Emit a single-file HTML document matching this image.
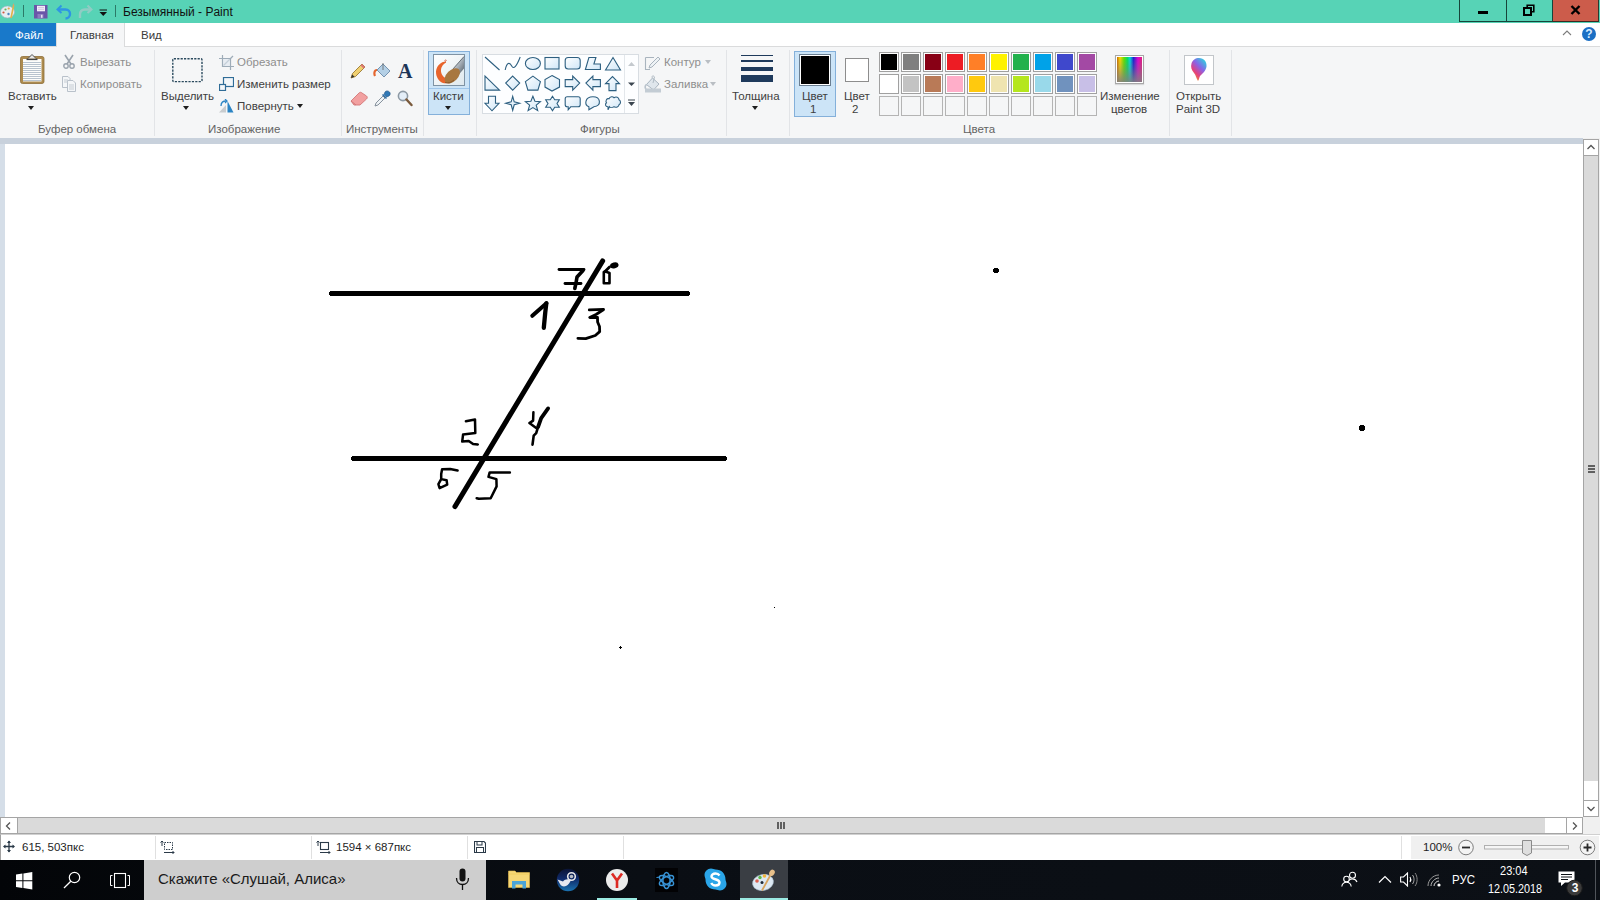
<!DOCTYPE html>
<html><head><meta charset="utf-8">
<style>
*{box-sizing:border-box}
html,body{margin:0;padding:0;width:1600px;height:900px;overflow:hidden;background:#fff;font-family:"Liberation Sans",sans-serif}
.a{position:absolute}
.t{position:absolute;font-size:11.5px;line-height:11.5px;white-space:nowrap;color:#404040}
.dis{color:#8e8e8e}
.lbl{color:#636363}
.sep{position:absolute;top:50px;width:1px;height:86px;background:#e2e4e7}
.arr{position:absolute;width:0;height:0;border-left:3.5px solid transparent;border-right:3.5px solid transparent;border-top:4px solid #1e1e1e}
.sw{position:absolute;width:20px;height:20px;border:1px solid #a0a0a0;background:#fff;padding:1px}
.sw i{display:block;width:16px;height:16px}
</style></head><body>
<!-- title bar -->
<div class="a" style="left:0;top:0;width:1600px;height:23px;background:#57d3b6"></div>
<div id="titlebar-content">

<svg class="a" style="left:0;top:2px" width="17" height="17" viewBox="0 0 17 17">
 <ellipse cx="7.5" cy="10" rx="7" ry="6" fill="#e6eef2" stroke="#9fb1bd" stroke-width="0.6"/>
 <circle cx="3.5" cy="10.5" r="1.1" fill="#d0583f"/>
 <circle cx="5.5" cy="7.5" r="1.1" fill="#6db35a"/>
 <circle cx="8.7" cy="6.5" r="1.1" fill="#e9a54a"/>
 <circle cx="8.5" cy="12" r="1.2" fill="#4c86c0"/>
 <path d="M11 16 L13.5 4" stroke="#e2b14a" stroke-width="1.6"/>
 <path d="M12.5 4 L13.5 1 L14.5 4 Z" fill="#d9a36a"/>
</svg>
<div class="a" style="left:23px;top:5px;width:1px;height:12px;background:#2b7a67"></div>
<svg class="a" style="left:34px;top:5px" width="14" height="14" viewBox="0 0 14 14">
 <rect x="0" y="0" width="13.5" height="13.5" fill="#6a55a8"/>
 <rect x="3" y="0.8" width="8" height="5.5" fill="#f2ecf8"/>
 <path d="M4 2.5 H10 M4 4.3 H10" stroke="#c4b8d8" stroke-width="0.7"/>
 <rect x="3.5" y="9" width="6" height="4.5" fill="#8c7bbf"/>
 <rect x="7" y="9.8" width="1.5" height="3" fill="#e6dff2"/>
</svg>
<svg class="a" style="left:56px;top:4px" width="16" height="16" viewBox="0 0 16 16">
 <path d="M2 5.5 H9.5 C12.5 5.5 14 7.5 14 10 C14 12.5 12 14.5 9.5 14.5" fill="none" stroke="#2f95e4" stroke-width="2.4"/>
 <path d="M5.5 1.5 L1.5 5.5 L5.5 9" fill="none" stroke="#2f95e4" stroke-width="2"/>
</svg>
<svg class="a" style="left:77px;top:4px" width="16" height="16" viewBox="0 0 16 16" opacity="0.55">
 <path d="M14 5.5 H8 C4.5 5.5 3 7.5 3 10.5 V14" fill="none" stroke="#c0c8d0" stroke-width="2.4"/>
 <path d="M10.5 1.5 L14.5 5.5 L10.5 9" fill="none" stroke="#c0c8d0" stroke-width="2"/>
</svg>
<svg class="a" style="left:99px;top:9px" width="9" height="8" viewBox="0 0 9 8">
 <path d="M0.5 1 H8" stroke="#111" stroke-width="1"/>
 <path d="M0.5 3 L4.25 7 L8 3 Z" fill="#111"/>
</svg>
<div class="a" style="left:115px;top:5px;width:1px;height:12px;background:#2b7a67"></div>

<div class="t" style="left:123px;top:6px;font-size:12px;line-height:12px;color:#111">Безымянный - Paint</div>
</div>
<!-- window buttons -->
<div class="a" style="left:1459px;top:0;width:140px;height:22px;border-left:1px solid #17443a;border-bottom:1px solid #17443a"></div>
<div class="a" style="left:1506px;top:0;width:1px;height:22px;background:#17443a"></div>
<div class="a" style="left:1552px;top:0;width:47px;height:22px;background:#cc5c4b;border-left:1px solid #17443a;border-bottom:1px solid #3b2a22;border-right:1px solid #2a3a30"></div>
<div class="a" style="left:1478px;top:11px;width:10px;height:3px;background:#000"></div>
<!-- restore glyph -->
<svg class="a" style="left:1523px;top:4px" width="12" height="12" viewBox="0 0 12 12">
 <rect x="1" y="4" width="7" height="7" fill="none" stroke="#000" stroke-width="2"/>
 <path d="M4.2 3 V1.2 H10.8 V7.8 H9" fill="none" stroke="#000" stroke-width="1.6"/>
</svg>
<svg class="a" style="left:1570px;top:5px" width="11" height="10" viewBox="0 0 11 10">
 <path d="M1.5 1 L9.5 9 M9.5 1 L1.5 9" stroke="#000" stroke-width="2.4"/>
</svg>
<!-- tab row -->
<div class="a" style="left:0;top:23px;width:1600px;height:23px;background:#fff"></div>
<div class="a" style="left:0;top:46px;width:1600px;height:1px;background:#dadbdc"></div>
<div class="a" style="left:0;top:23px;width:56px;height:23px;background:#1979ca"></div>
<div class="t" style="left:15px;top:30px;color:#fff">Файл</div>
<div class="a" style="left:56px;top:23px;width:69px;height:24px;background:#f5f6f7;border-left:1px solid #dadbdc;border-right:1px solid #dadbdc"></div>
<div class="t" style="left:70px;top:30px;color:#3b3b3b">Главная</div>
<div class="t" style="left:141px;top:30px;color:#3b3b3b">Вид</div>
<!-- ribbon -->
<div class="a" style="left:0;top:47px;width:1600px;height:91px;background:#f5f6f7"></div>
<div class="a" style="left:0;top:138px;width:1583px;height:6px;background:#c8d1dc"></div>
<div class="a" style="left:0;top:144px;width:5px;height:673px;background:#d5dee8"></div>
<div id="ribbon">
<!-- separators -->
<div class="sep" style="left:154px"></div>
<div class="sep" style="left:341px"></div>
<div class="sep" style="left:423px"></div>
<div class="sep" style="left:476px"></div>
<div class="sep" style="left:726px"></div>
<div class="sep" style="left:789px"></div>
<div class="sep" style="left:1169px"></div>
<div class="sep" style="left:1231px"></div>
<!-- group labels -->
<div class="t lbl" style="left:38px;top:124px">Буфер обмена</div>
<div class="t lbl" style="left:208px;top:124px">Изображение</div>
<div class="t lbl" style="left:346px;top:124px">Инструменты</div>
<div class="t lbl" style="left:580px;top:124px">Фигуры</div>
<div class="t lbl" style="left:963px;top:124px">Цвета</div>
<!-- clipboard -->
<svg class="a" style="left:19px;top:53px" width="27" height="33" viewBox="0 0 27 33">
 <rect x="1.5" y="3.5" width="23.5" height="27" rx="2" fill="#ad8b4e" stroke="#8e6e38" stroke-width="0.8"/>
 <rect x="4" y="6" width="18.5" height="22.5" fill="#fdfdfb"/>
 <g stroke="#b8c3ce" stroke-width="1"><line x1="4" y1="9.5" x2="22" y2="9.5"/><line x1="4" y1="11.5" x2="22" y2="11.5"/><line x1="4" y1="13.5" x2="22" y2="13.5"/><line x1="4" y1="15.5" x2="22" y2="15.5"/><line x1="4" y1="17.5" x2="22" y2="17.5"/><line x1="4" y1="19.5" x2="22" y2="19.5"/><line x1="4" y1="21.5" x2="22" y2="21.5"/><line x1="4" y1="23.5" x2="22" y2="23.5"/><line x1="4" y1="25.5" x2="22" y2="25.5"/><line x1="4" y1="27.5" x2="22" y2="27.5"/></g>
 <path d="M7.5 6.3 H18.5" stroke="#444" stroke-width="1.6"/>
 <path d="M9 5.5 L13 1.5 L17 5.5" fill="#e8e8e8" stroke="#555" stroke-width="1"/>
</svg>
<div class="t" style="left:8px;top:91px">Вставить</div>
<div class="arr" style="left:28px;top:106px"></div>
<svg class="a" style="left:63px;top:54px" width="12" height="15" viewBox="0 0 12 15">
 <path d="M2 1 L8 10 M10 1 L4 10" stroke="#9aa3ad" stroke-width="1.6" fill="none"/>
 <circle cx="3" cy="12" r="2.2" fill="none" stroke="#9aa3ad" stroke-width="1.4"/><circle cx="9" cy="12" r="2.2" fill="none" stroke="#9aa3ad" stroke-width="1.4"/>
</svg>
<div class="t dis" style="left:80px;top:57px">Вырезать</div>
<svg class="a" style="left:61px;top:76px" width="16" height="16" viewBox="0 0 16 16">
 <path d="M1.5 0.5 H7 L9 2.5 V11.5 H1.5 Z" fill="#f4f6f8" stroke="#b9c1ca"/>
 <path d="M6.5 4.5 H12 L14.5 7 V15.5 H6.5 Z" fill="#f4f6f8" stroke="#b9c1ca"/>
 <g stroke="#c5ccd3"><line x1="3" y1="4" x2="7" y2="4"/><line x1="3" y1="6" x2="7" y2="6"/><line x1="8" y1="9" x2="13" y2="9"/><line x1="8" y1="11" x2="13" y2="11"/><line x1="8" y1="13" x2="13" y2="13"/></g>
</svg>
<div class="t dis" style="left:80px;top:79px">Копировать</div>
<!-- image group -->
<svg class="a" style="left:171px;top:57px" width="33" height="27" viewBox="0 0 33 27"><rect x="1.8" y="1.8" width="29.2" height="22.8" rx="1" fill="none" stroke="#2b4a5e" stroke-width="1.4" stroke-dasharray="2.2 1.2"/></svg>
<div class="t" style="left:161px;top:91px">Выделить</div>
<div class="arr" style="left:183px;top:106px"></div>
<svg class="a" style="left:219px;top:55px" width="15" height="15" viewBox="0 0 15 15">
 <path d="M3.5 0 V11.5 H15 M0 3.5 H11.5 V15" stroke="#9eacb8" stroke-width="1.2" fill="none"/>
 <path d="M4.5 10.5 L14 1" stroke="#9eacb8" stroke-width="1.2"/>
 <rect x="4" y="4" width="7" height="7" fill="#dde6ee" opacity="0.6"/>
</svg>
<div class="t dis" style="left:237px;top:57px">Обрезать</div>
<svg class="a" style="left:219px;top:77px" width="15" height="14" viewBox="0 0 15 14">
 <rect x="4.5" y="0.5" width="10" height="9" fill="#f2f6f9" stroke="#2f6c97" stroke-width="1.2"/>
 <rect x="0.5" y="7.5" width="6" height="6" fill="#f2f6f9" stroke="#2f6c97" stroke-width="1.2"/>
</svg>
<div class="t" style="left:237px;top:79px">Изменить размер</div>
<svg class="a" style="left:218px;top:99px" width="16" height="14" viewBox="0 0 16 14">
 <path d="M1 13.5 L8 13.5 L8 6 Z" fill="#c8cccf"/>
 <path d="M9.5 13.5 L15.5 13.5 L9.5 2 Z" fill="#2b84c4"/>
 <path d="M3 7 C3 3 5 2 8 2" stroke="#2b84c4" stroke-width="1.3" fill="none"/>
 <path d="M7 0 L9 2 L7 4" stroke="#2b84c4" stroke-width="1.2" fill="none"/>
</svg>
<div class="t" style="left:237px;top:101px">Повернуть</div>
<div class="arr" style="left:297px;top:104px"></div>
<!-- tools -->
<svg class="a" style="left:350px;top:63px" width="16" height="16" viewBox="0 0 16 16">
 <path d="M1 15 L2.5 10.5 L12 1 L15 4 L5.5 13.5 Z" fill="#f0d070" stroke="#9b7b33" stroke-width="0.9"/>
 <path d="M12 1 L15 4 L13.5 5.5 L10.5 2.5 Z" fill="#d77" />
 <path d="M1 15 L2.2 11.5 L4.5 13.8 Z" fill="#333"/>
</svg>
<svg class="a" style="left:373px;top:62px" width="18" height="17" viewBox="0 0 18 17">
 <path d="M4 8 L10 2 L17 9 L11 15 Z" fill="#b4d0e6" stroke="#6a8aa8" stroke-width="0.9"/>
 <path d="M4 8 C1 8 1 12 2 14" stroke="#e5662f" stroke-width="2.2" fill="none"/>
 <path d="M10 1 L10 8" stroke="#666" stroke-width="0.8"/>
</svg>
<div class="a" style="left:398px;top:61px;font-family:'Liberation Serif',serif;font-weight:bold;font-size:20px;line-height:20px;color:#1d3557">A</div>
<svg class="a" style="left:350px;top:91px" width="18" height="15" viewBox="0 0 18 15">
 <path d="M1 10 L9 2 C10 1 11 1 12 2 L16.5 5 C17.5 6 17.5 7 16.5 8 L10 14 L4 14 Z" fill="#f2a0a0" stroke="#d27777" stroke-width="0.9"/>
 <path d="M1 10 L6 14" stroke="#d27777" stroke-width="1"/>
</svg>
<svg class="a" style="left:374px;top:90px" width="17" height="17" viewBox="0 0 17 17">
 <path d="M1 16 L2 13 L9 6 L11 8 L4 15 Z" fill="#eef2f5" stroke="#7b8793" stroke-width="0.9"/>
 <path d="M9 4 L13 8 L12 9 L8 5 Z" fill="#2f6ea6"/>
 <path d="M11 2 C12 0.5 14 0.5 15.5 2 C16.5 3 16.5 5 15 6 L12.5 7 L10 4.5 Z" fill="#2f78b6" stroke="#1f4f80" stroke-width="0.6"/>
</svg>
<svg class="a" style="left:397px;top:90px" width="16" height="17" viewBox="0 0 16 17">
 <circle cx="6" cy="6" r="4.6" fill="#e4eef8" stroke="#8d99a4" stroke-width="1.6"/>
 <path d="M9.5 9.5 L14.5 15" stroke="#7a5a3c" stroke-width="2.4" stroke-linecap="round"/>
</svg>

<div class="a" style="left:482px;top:54px;width:157px;height:60px;background:#fdfeff;border:1px solid #d8dde2"></div>
<div class="a" style="left:624px;top:55px;width:1px;height:58px;background:#e3e7eb"></div>
<svg class="a" style="left:0;top:0" width="640" height="120">
<defs><linearGradient id="gf" x1="0" y1="0" x2="1" y2="1"><stop offset="0" stop-color="#ffffff"/><stop offset="1" stop-color="#cfe6f7"/></linearGradient></defs>
<g transform="translate(484.5,56.0)"><path d="M0.5 1 L15 14" stroke="#2d5f80" stroke-width="1.1"/></g><g transform="translate(504.7,56.0)"><path d="M0.5 14 C2 6 5 6 7 10 C9 14 12 10 15.5 1" stroke="#2d5f80" stroke-width="1.1" fill="none"/></g><g transform="translate(524.9,56.0)"><ellipse cx="8" cy="7.5" rx="7.5" ry="6" fill="url(#gf)" stroke="#2d5f80" stroke-width="1.1"/></g><g transform="translate(544.5,56.0)"><rect x="0.5" y="1.5" width="14" height="11.5" fill="url(#gf)" stroke="#2d5f80" stroke-width="1.1"/></g><g transform="translate(564.7,56.0)"><rect x="0.5" y="1.5" width="15" height="11.5" rx="3" fill="url(#gf)" stroke="#2d5f80" stroke-width="1.1"/></g><g transform="translate(584.9,56.0)"><path d="M0.5 13.5 L4 1.5 H11 L9 8 H15.5 V13.5 Z" fill="url(#gf)" stroke="#2d5f80" stroke-width="1.1"/></g><g transform="translate(605.0,56.0)"><path d="M0.5 14 L8 1.5 L15.5 14 Z" fill="url(#gf)" stroke="#2d5f80" stroke-width="1.1"/></g><g transform="translate(484.5,75.6)"><path d="M0.5 0.5 V14.5 H15 Z" fill="url(#gf)" stroke="#2d5f80" stroke-width="1.1"/></g><g transform="translate(504.7,75.6)"><path d="M8 0.5 L15 7.5 L8 14.5 L1 7.5 Z" fill="url(#gf)" stroke="#2d5f80" stroke-width="1.1"/></g><g transform="translate(524.9,75.6)"><path d="M8 0.5 L15.5 6 L13 14.5 H3 L0.5 6 Z" fill="url(#gf)" stroke="#2d5f80" stroke-width="1.1"/></g><g transform="translate(544.5,75.6)"><path d="M7.5 0 L15 4 V11.5 L7.5 15.5 L0.5 11.5 V4 Z" fill="url(#gf)" stroke="#2d5f80" stroke-width="1.1"/></g><g transform="translate(564.7,75.6)"><path d="M0.5 4 H8 V0.5 L15 7.5 L8 14.5 V11 H0.5 Z" fill="url(#gf)" stroke="#2d5f80" stroke-width="1.1"/></g><g transform="translate(584.9,75.6)"><path d="M15.5 4 H8 V0.5 L1 7.5 L8 14.5 V11 H15.5 Z" fill="url(#gf)" stroke="#2d5f80" stroke-width="1.1"/></g><g transform="translate(605.0,75.6)"><path d="M4 15 V8 H0.5 L7.5 1 L14.5 8 H11 V15 Z" fill="url(#gf)" stroke="#2d5f80" stroke-width="1.1"/></g><g transform="translate(484.5,95.8)"><path d="M4 0.5 V7.5 H0.5 L7.5 15 L14.5 7.5 H11 V0.5 Z" fill="url(#gf)" stroke="#2d5f80" stroke-width="1.1"/></g><g transform="translate(504.7,95.8)"><path d="M8 0.5 L9.5 6 L15 7.5 L9.5 9 L8 14.5 L6.5 9 L1 7.5 L6.5 6 Z" fill="url(#gf)" stroke="#2d5f80" stroke-width="1.1"/></g><g transform="translate(524.9,95.8)"><path d="M8 0.5 L10 5.5 L15.5 5.8 L11.3 9.3 L12.8 14.8 L8 11.8 L3.2 14.8 L4.7 9.3 L0.5 5.8 L6 5.5 Z" fill="url(#gf)" stroke="#2d5f80" stroke-width="1.1"/></g><g transform="translate(544.5,95.8)"><path d="M8 0.5 L10.2 4 H14.8 L12.5 7.8 L14.8 11.5 H10.2 L8 15 L5.8 11.5 H1.2 L3.5 7.8 L1.2 4 H5.8 Z" fill="url(#gf)" stroke="#2d5f80" stroke-width="1.1"/></g><g transform="translate(564.7,95.8)"><path d="M2.5 1 H13.5 Q15.5 1 15.5 3 V9 Q15.5 11 13.5 11 H6 L3.5 14 V11 H2.5 Q0.5 11 0.5 9 V3 Q0.5 1 2.5 1 Z" fill="url(#gf)" stroke="#2d5f80" stroke-width="1.1"/></g><g transform="translate(584.9,95.8)"><path d="M4 11 C-1 9 0 1 8 1 C16 1 17 10 9 11 L4 14 Z" fill="url(#gf)" stroke="#2d5f80" stroke-width="1.1"/></g><g transform="translate(605.0,95.8)"><path d="M3 11 C0 11 0 8 1.5 7 C0 5 2 2 4 3 C5 0.5 8 0.5 9 2 C11 0.5 14 1.5 14 4 C16 5 16 8 14 9 C14 11 11 12 9 11 C7 12 5 12 4.5 11 L3 14 Z" fill="url(#gf)" stroke="#2d5f80" stroke-width="1.1"/></g>
<path d="M628 66 L631.5 62 L635 66 Z" fill="#c4c9ce"/>
<path d="M628 82.5 L631.5 86 L635 82.5 Z" fill="#3c4650"/>
<rect x="628" y="99.5" width="7" height="1" fill="#3c4650"/><path d="M628 102 L631.5 106 L635 102 Z" fill="#3c4650"/>
</svg>
<!-- contour/fill -->
<svg class="a" style="left:644px;top:55px" width="17" height="16" viewBox="0 0 17 16">
 <path d="M1.5 2.5 H10 M1.5 2.5 V14.5 H6" stroke="#a9b4be" stroke-width="1.1" fill="none"/>
 <path d="M5 13 L6 10 L14 2 L16 4 L8 12 Z" fill="#eef2f5" stroke="#a9b4be" stroke-width="1"/>
</svg>
<div class="t dis" style="left:664px;top:57px">Контур</div>
<div class="arr" style="left:705px;top:60px;border-top-color:#b9bec3"></div>
<svg class="a" style="left:644px;top:75px" width="18" height="18" viewBox="0 0 18 18">
 <path d="M2.5 9.5 L8.5 3 L15 9 L9.5 15 Z" fill="#dfe6ec" stroke="#a9b5c0" stroke-width="1"/>
 <path d="M8.5 3 C7 1 9.5 0 10.5 2 L9 8" fill="none" stroke="#a9b5c0" stroke-width="0.9"/>
 <path d="M2.5 9.5 C0.5 11 1 13 2 14" fill="none" stroke="#b9c3cc" stroke-width="1.6"/>
 <rect x="1" y="13.5" width="16" height="4" fill="#c3ccd4"/>
</svg>
<div class="t dis" style="left:664px;top:79px">Заливка</div>
<div class="arr" style="left:710px;top:82px;border-top-color:#b9bec3"></div>
<!-- thickness -->
<div class="a" style="left:741px;top:55px;width:32px;height:1px;background:#1e3a5c"></div>
<div class="a" style="left:741px;top:60px;width:32px;height:2px;background:#1e3a5c"></div>
<div class="a" style="left:741px;top:67px;width:32px;height:4px;background:#1e3a5c"></div>
<div class="a" style="left:741px;top:75px;width:32px;height:7px;background:#1e3a5c"></div>
<div class="t" style="left:732px;top:91px">Толщина</div>
<div class="arr" style="left:752px;top:106px"></div>
<!-- colors -->
<div class="a" style="left:794px;top:51px;width:42px;height:66px;background:#cce4f7;border:1px solid #84b0da"></div>
<div class="a" style="left:799px;top:54px;width:32px;height:32px;border:1px solid #6b7f92;background:#fff;padding:1px"><div style="width:28px;height:28px;background:#000"></div></div>
<div class="t" style="left:802px;top:91px">Цвет</div>
<div class="t" style="left:810px;top:104px">1</div>
<div class="a" style="left:845px;top:58px;width:24px;height:24px;border:1px solid #8d8d8d;background:#fff"></div>
<div class="t" style="left:844px;top:91px">Цвет</div>
<div class="t" style="left:852px;top:104px">2</div>
<div class="sw" style="left:879px;top:52px"><i style="background:#000000"></i></div><div class="sw" style="left:879px;top:74px"><i style="background:#ffffff"></i></div><div class="sw" style="left:879px;top:96px;background:#f5f6f7;border-color:#b4b4b4"></div><div class="sw" style="left:901px;top:52px"><i style="background:#7f7f7f"></i></div><div class="sw" style="left:901px;top:74px"><i style="background:#c3c3c3"></i></div><div class="sw" style="left:901px;top:96px;background:#f5f6f7;border-color:#b4b4b4"></div><div class="sw" style="left:923px;top:52px"><i style="background:#880015"></i></div><div class="sw" style="left:923px;top:74px"><i style="background:#b97a57"></i></div><div class="sw" style="left:923px;top:96px;background:#f5f6f7;border-color:#b4b4b4"></div><div class="sw" style="left:945px;top:52px"><i style="background:#ed1c24"></i></div><div class="sw" style="left:945px;top:74px"><i style="background:#ffaec9"></i></div><div class="sw" style="left:945px;top:96px;background:#f5f6f7;border-color:#b4b4b4"></div><div class="sw" style="left:967px;top:52px"><i style="background:#ff7f27"></i></div><div class="sw" style="left:967px;top:74px"><i style="background:#ffc90e"></i></div><div class="sw" style="left:967px;top:96px;background:#f5f6f7;border-color:#b4b4b4"></div><div class="sw" style="left:989px;top:52px"><i style="background:#fff200"></i></div><div class="sw" style="left:989px;top:74px"><i style="background:#efe4b0"></i></div><div class="sw" style="left:989px;top:96px;background:#f5f6f7;border-color:#b4b4b4"></div><div class="sw" style="left:1011px;top:52px"><i style="background:#22b14c"></i></div><div class="sw" style="left:1011px;top:74px"><i style="background:#b5e61d"></i></div><div class="sw" style="left:1011px;top:96px;background:#f5f6f7;border-color:#b4b4b4"></div><div class="sw" style="left:1033px;top:52px"><i style="background:#00a2e8"></i></div><div class="sw" style="left:1033px;top:74px"><i style="background:#99d9ea"></i></div><div class="sw" style="left:1033px;top:96px;background:#f5f6f7;border-color:#b4b4b4"></div><div class="sw" style="left:1055px;top:52px"><i style="background:#3f48cc"></i></div><div class="sw" style="left:1055px;top:74px"><i style="background:#7092be"></i></div><div class="sw" style="left:1055px;top:96px;background:#f5f6f7;border-color:#b4b4b4"></div><div class="sw" style="left:1077px;top:52px"><i style="background:#a349a4"></i></div><div class="sw" style="left:1077px;top:74px"><i style="background:#c8bfe7"></i></div><div class="sw" style="left:1077px;top:96px;background:#f5f6f7;border-color:#b4b4b4"></div>
<!-- edit colors -->
<div class="a" style="left:1115px;top:55px;width:29px;height:29px;border:1px solid #a8a8a8;background:#fff;padding:1px;box-shadow:0 1px 1px rgba(0,0,0,0.12)">
 <div style="width:25px;height:25px;background:linear-gradient(to bottom,rgba(128,128,128,0) 0%,rgba(128,128,128,0.35) 45%,rgba(128,128,128,0.9) 100%),linear-gradient(to right,#c86a00 0%,#ffd800 12%,#5fe000 28%,#00e060 42%,#00d8e0 52%,#1a20d0 66%,#e000d0 84%,#e0207a 100%)"></div>
</div>
<div class="t" style="left:1100px;top:91px">Изменение</div>
<div class="t" style="left:1111px;top:104px">цветов</div>
<!-- paint 3d -->
<div class="a" style="left:1184px;top:55px;width:30px;height:30px;border:1px solid #c2c6ca;background:#fff"></div>
<svg class="a" style="left:1189px;top:57px" width="20" height="26" viewBox="0 0 20 26">
 <defs><linearGradient id="p3" x1="0.85" y1="0.05" x2="0.2" y2="0.95"><stop offset="0" stop-color="#2fd0e0"/><stop offset="0.4" stop-color="#8a62e6"/><stop offset="0.72" stop-color="#e4407c"/><stop offset="1" stop-color="#f0a020"/></linearGradient></defs>
 <path d="M10 1 C15 1 18 5 17.5 9.5 C17 14 13 17 11 19 C10 21 10 23 9 24 C7 21 7 18 5 16 C2.5 13 1.5 10 2.5 6.5 C3.5 3 6.5 1 10 1 Z" fill="url(#p3)"/>
</svg>
<div class="t" style="left:1176px;top:91px">Открыть</div>
<div class="t" style="left:1176px;top:104px">Paint 3D</div>
<!-- minimize ribbon / help -->
<svg class="a" style="left:1561px;top:29px" width="12" height="8" viewBox="0 0 12 8"><path d="M2 6 L6 2 L10 6" stroke="#7c7c7c" stroke-width="1.1" fill="none"/></svg>
<div class="a" style="left:1582px;top:27px;width:14px;height:14px;border-radius:50%;background:#1b6fc4"></div>
<div class="a" style="left:1585px;top:27px;width:8px;text-align:center;font-size:12px;line-height:14px;font-weight:bold;color:#d8ecff">?</div>

<!-- brushes button -->
<div class="a" style="left:428px;top:51px;width:42px;height:64px;background:#cce4f7;border:1px solid #84b0da"></div>
<div class="a" style="left:429px;top:88px;width:40px;height:1px;background:#9fc6ea"></div>
<div class="a" style="left:433px;top:54px;width:32px;height:32px;background:#fff;border:1px solid #7f93a4"></div>
<svg class="a" style="left:433px;top:54px" width="32" height="32" viewBox="0 0 32 32">
 <defs><linearGradient id="hdl" x1="0" y1="0" x2="1" y2="1"><stop offset="0" stop-color="#e8ecef"/><stop offset="0.5" stop-color="#aab3bb"/><stop offset="1" stop-color="#4f5a64"/></linearGradient>
 <linearGradient id="bgb" x1="0" y1="0" x2="1" y2="1"><stop offset="0" stop-color="#ffffff"/><stop offset="1" stop-color="#dfe9ee"/></linearGradient></defs>
 <rect x="1" y="1" width="30" height="30" fill="url(#bgb)"/>
 <path d="M12.8 7.2 C8 8 3.5 11.5 3 17.5 C2.8 23 6 28 11 29.3 L16.5 29.3 L17 25 C12.5 25.2 8.5 22 8 17.5 C7.8 13.5 9.8 10.2 13 8.8 Z" fill="#e8642c"/>
 <path d="M12.5 7.5 C14 6 13 5.5 11.5 6.5" stroke="#d0604a" stroke-width="0.9" fill="none"/>
 <path d="M19.5 15.5 L31 2.5 L31 14.5 L25.5 21 Z" fill="url(#hdl)"/>
 <path d="M19.5 15.5 L31 2.5" stroke="#39434c" stroke-width="0.7"/>
 <ellipse cx="19.3" cy="21.8" rx="9.2" ry="5.6" transform="rotate(-45 19.3 21.8)" fill="#a8773f"/>
 <path d="M12 28.5 C15 29.5 18.5 28.5 21 26" stroke="#7e5228" stroke-width="0.8" fill="none"/>
</svg>
<div class="t" style="left:433px;top:91px">Кисти</div>
<div class="arr" style="left:445px;top:106px"></div>
</div>
<!-- canvas -->
<div id="canvas">
<svg class="a" style="left:0;top:0" width="1583" height="817">
<rect x="330" y="291" width="359" height="5" fill="#000"/><rect x="329" y="292" width="361" height="3" fill="#000"/>
<rect x="352" y="456" width="374" height="5" fill="#000"/><rect x="351" y="457" width="376" height="3" fill="#000"/>
<g stroke="#000" fill="none" stroke-linecap="round" stroke-linejoin="round">
 
 
 <line x1="602.6" y1="261" x2="455" y2="506.5" stroke-width="5.1"/>
 <!-- 7 -->
 <path d="M559 269.5 L584 269.5" stroke-width="2.8"/>
 <path d="M583 270.5 L577 277 L576 283 L574.8 288.5" stroke-width="3.6"/>
 <path d="M565 283.5 L581 283.5" stroke-width="2.8"/>
 <!-- 8 -->
 <path d="M603.8 272 L603.8 283.2 L609.5 283.2 L609.5 273 L605.5 271.5 Z" stroke-width="2.6"/>
 <path d="M604.5 272 L609.5 267" stroke-width="2.8"/>
 <ellipse cx="614.3" cy="265.4" rx="4.3" ry="3" fill="#000" stroke="none" transform="rotate(-15 614.3 265.4)"/>
 <!-- 1 -->
 <path d="M532.3 315.8 L546.5 303.2" stroke-width="4"/>
 <path d="M546.3 303.5 L545.3 312 L543.8 327.8" stroke-width="4.3"/>
 <!-- 3 -->
 <path d="M589.2 309.9 L603.5 309.4" stroke-width="2.6"/>
 <path d="M603.3 309.8 L596 314.5 L589.7 317.5 L597.5 317.5 L597.6 322 L599.5 326.5 L599.7 331.6 L595.3 335.5 L585.7 338.6 L577.9 338.3" stroke-width="2.8"/>
 <!-- 2 -->
 <path d="M465.9 421.2 L475 419.4 L475.3 433.1 L463.1 434.4 L462.2 441.6 L468.7 440.9 L473.1 444 L477.8 444.4" stroke-width="2.5"/>
 <!-- 4 -->
 <path d="M533.4 412.2 L533.1 420.6 L529.4 423.1 L536.2 428.1" stroke-width="2.5"/>
 <path d="M548.1 408.4 L541.2 418.1 L538.1 426.9" stroke-width="3.8"/>
 <path d="M538.1 426.9 L536.2 433.1 L533.7 435.6 L532.5 444.7" stroke-width="2.6"/>
 <!-- 6 -->
 <path d="M457.6 470.4 L450.2 469 L442.1 469.3 L441.2 474 L441.2 479.1 L446.6 480.2 L447.2 484.7 L439.6 488.1 L438.4 484.2 L441.2 479.1" stroke-width="2.5"/>
 <!-- 5 -->
 <path d="M509.9 472.4 L489.6 472.6 L488.5 476.9 L496.4 479.1 L496.6 486.4 L490.7 498.2 L478.9 498.8 L476.7 498.2" stroke-width="2.5"/>
</g>
<rect x="994" y="268" width="4" height="5" fill="#000"/><rect x="993" y="269" width="6" height="3" fill="#000"/>
<rect x="1360" y="425" width="4" height="6" fill="#000"/><rect x="1359" y="426" width="6" height="4" fill="#000"/>
<rect x="774" y="607" width="1" height="1" fill="#000"/>
<rect x="620" y="646" width="1" height="3" fill="#000"/><rect x="619" y="647" width="3" height="1" fill="#000"/>
</svg>
</div>
<!-- scrollbars -->
<div id="scroll">
<!-- vertical scrollbar -->
<div class="a" style="left:1583px;top:138px;width:17px;height:679px;background:#f0f0f0"></div>
<div class="a" style="left:1583px;top:139px;width:16px;height:17px;background:#fff;border:1px solid #a5a5a5"></div>
<svg class="a" style="left:1586px;top:143px" width="10" height="8" viewBox="0 0 10 8"><path d="M1.5 6 L5 2.5 L8.5 6" stroke="#555" stroke-width="1.3" fill="none"/></svg>
<div class="a" style="left:1583px;top:155px;width:16px;height:627px;background:#dadada;border:1px solid #a5a5a5"></div>
<div class="a" style="left:1583px;top:781px;width:16px;height:20px;background:#fff;border:1px solid #a5a5a5;border-top:none;border-bottom:none"></div>
<div class="a" style="left:1583px;top:800px;width:16px;height:17px;background:#fff;border:1px solid #a5a5a5"></div>
<svg class="a" style="left:1586px;top:805px" width="10" height="8" viewBox="0 0 10 8"><path d="M1.5 2 L5 5.5 L8.5 2" stroke="#555" stroke-width="1.3" fill="none"/></svg>
<div class="a" style="left:1588px;top:465px;width:7px;height:2px;background:#606060"></div>
<div class="a" style="left:1588px;top:468px;width:7px;height:2px;background:#606060"></div>
<div class="a" style="left:1588px;top:471px;width:7px;height:2px;background:#606060"></div>
<div class="a" style="left:1583px;top:817px;width:17px;height:17px;background:#f0f0f0"></div>
<!-- horizontal scrollbar -->
<div class="a" style="left:0;top:817px;width:1583px;height:17px;background:#f0f0f0"></div>
<div class="a" style="left:0;top:817px;width:18px;height:17px;background:#fff;border:1px solid #a5a5a5"></div>
<svg class="a" style="left:4px;top:821px" width="9" height="10" viewBox="0 0 9 10"><path d="M6 1.5 L2.5 5 L6 8.5" stroke="#555" stroke-width="1.3" fill="none"/></svg>
<div class="a" style="left:17px;top:817px;width:1529px;height:17px;background:#dadada;border:1px solid #a5a5a5"></div>
<div class="a" style="left:1545px;top:817px;width:22px;height:17px;background:#fff;border-top:1px solid #a5a5a5;border-bottom:1px solid #a5a5a5"></div>
<div class="a" style="left:1566px;top:817px;width:17px;height:17px;background:#fff;border:1px solid #a5a5a5"></div>
<svg class="a" style="left:1570px;top:821px" width="9" height="10" viewBox="0 0 9 10"><path d="M3 1.5 L6.5 5 L3 8.5" stroke="#555" stroke-width="1.3" fill="none"/></svg>
<div class="a" style="left:777px;top:822px;width:2px;height:7px;background:#606060"></div>
<div class="a" style="left:780px;top:822px;width:2px;height:7px;background:#606060"></div>
<div class="a" style="left:783px;top:822px;width:2px;height:7px;background:#606060"></div>
</div>
<!-- status bar -->
<div id="status">
<div class="a" style="left:0;top:834px;width:1600px;height:26px;background:#fff;border-left:1px solid #a0a0a0;border-top:1px solid #d0d0d0"></div>
<div class="a" style="left:155px;top:836px;width:1px;height:23px;background:#e0e0e0"></div>
<div class="a" style="left:311px;top:836px;width:1px;height:23px;background:#e0e0e0"></div>
<div class="a" style="left:467px;top:836px;width:1px;height:23px;background:#e0e0e0"></div>
<div class="a" style="left:623px;top:836px;width:1px;height:23px;background:#e0e0e0"></div>
<div class="a" style="left:1401px;top:836px;width:1px;height:23px;background:#e0e0e0"></div>
<div class="a" style="left:1411px;top:836px;width:188px;height:23px;background:#f0f0f0"></div>
<svg class="a" style="left:3px;top:840px" width="12" height="13" viewBox="0 0 12 13">
 <path d="M6 1 V12 M1 6.5 H11" stroke="#2b3a48" stroke-width="1.3"/>
 <path d="M4 3 L6 0.5 L8 3 Z M4 10 L6 12.5 L8 10 Z M2.5 4.5 L0 6.5 L2.5 8.5 Z M9.5 4.5 L12 6.5 L9.5 8.5 Z" fill="#2b3a48"/>
</svg>
<div class="t" style="left:22px;top:842px;font-size:11.5px;color:#1e1e1e">615, 503пкс</div>
<svg class="a" style="left:160px;top:840px" width="15" height="14" viewBox="0 0 15 14">
 <path d="M2 1 V6 M0.5 2.5 L2 1 L3.5 2.5" stroke="#2b3a48" stroke-width="1" fill="none"/>
 <rect x="4.5" y="2.5" width="8" height="7" fill="none" stroke="#2b3a48" stroke-width="1" stroke-dasharray="1.5 1"/>
 <path d="M4 12.5 H14 M12.5 11 L14 12.5 L12.5 14" stroke="#2b3a48" stroke-width="1" fill="none"/>
</svg>
<svg class="a" style="left:316px;top:840px" width="15" height="14" viewBox="0 0 15 14">
 <path d="M2 1 V6 M0.5 2.5 L2 1 L3.5 2.5" stroke="#2b3a48" stroke-width="1" fill="none"/>
 <rect x="4.5" y="2.5" width="8" height="7" fill="none" stroke="#2b3a48" stroke-width="1.1"/>
 <path d="M4 12.5 H14 M12.5 11 L14 12.5 L12.5 14" stroke="#2b3a48" stroke-width="1" fill="none"/>
</svg>
<div class="t" style="left:336px;top:842px;color:#1e1e1e">1594 × 687пкс</div>
<svg class="a" style="left:474px;top:841px" width="12" height="12" viewBox="0 0 12 12">
 <path d="M0.5 0.5 H10 L11.5 2 V11.5 H0.5 Z" fill="none" stroke="#2b3a48" stroke-width="1.1"/>
 <rect x="3" y="0.5" width="5" height="3.5" fill="none" stroke="#2b3a48" stroke-width="1"/>
 <rect x="2.5" y="6.5" width="7" height="5" fill="none" stroke="#2b3a48" stroke-width="1"/>
</svg>
<div class="t" style="left:1423px;top:842px;color:#1e1e1e">100%</div>
<svg class="a" style="left:1456px;top:838px" width="144" height="20" viewBox="0 0 144 20">
 <circle cx="10" cy="9.5" r="7.3" fill="#f4f4f4" stroke="#6e6e6e" stroke-width="0.9"/>
 <path d="M6 9.5 H14" stroke="#2a2a2a" stroke-width="1.8"/>
 <rect x="28.5" y="7.5" width="84" height="3.5" fill="#f6f6f6" stroke="#b0b0b0" stroke-width="1"/>
 <path d="M66.5 2.5 H75.5 V15 L71 17.5 L66.5 15 Z" fill="#dedede" stroke="#8a8a8a" stroke-width="1"/>
 <circle cx="131.5" cy="9.5" r="7.3" fill="#f4f4f4" stroke="#6e6e6e" stroke-width="0.9"/>
 <path d="M127.5 9.5 H135.5 M131.5 5.5 V13.5" stroke="#2a2a2a" stroke-width="1.8"/>
</svg>
</div>
<!-- taskbar -->
<div class="a" style="left:0;top:860px;width:1600px;height:40px;background:#0b0f14"></div>
<div id="taskbar">
<div class="a" style="left:0;top:860px;width:1600px;height:40px;background:linear-gradient(to right,#030508 0%,#0a0e14 40%,#0c1016 100%)"></div>
<!-- start -->
<svg class="a" style="left:16px;top:871.5px" width="17" height="18" viewBox="0 0 17 18">
 <path d="M0 2.6 L6.4 1.6 V8.2 H0 Z M7.4 1.45 L16.3 0.1 V8.2 H7.4 Z M0 9.2 H6.4 V15.9 L0 15 Z M7.4 9.2 H16.3 V17.4 L7.4 16.05 Z" fill="#fff"/>
</svg>
<!-- search -->
<svg class="a" style="left:62px;top:870px" width="20" height="20" viewBox="0 0 20 20">
 <circle cx="12.5" cy="7.5" r="5.2" fill="none" stroke="#fff" stroke-width="1.2"/>
 <path d="M8.8 11.2 L2 18" stroke="#fff" stroke-width="1.3"/>
</svg>
<!-- task view -->
<svg class="a" style="left:109px;top:872px" width="22" height="17" viewBox="0 0 22 17">
 <rect x="5.5" y="1.5" width="11" height="14" fill="none" stroke="#fff" stroke-width="1.1"/>
 <path d="M3.5 3.5 H1.5 V13.5 H3.5 M18.5 3.5 H20.5 V13.5 H18.5" fill="none" stroke="#fff" stroke-width="1"/>
</svg>
<!-- search box -->
<div class="a" style="left:144px;top:860px;width:342px;height:40px;background:#cecece"></div>
<div class="a" style="left:158px;top:870px;font-size:15px;line-height:17px;color:#1a1a1a;white-space:nowrap">Скажите «Слушай, Алиса»</div>
<svg class="a" style="left:455px;top:868px" width="15" height="23" viewBox="0 0 15 23">
 <rect x="4.5" y="0.5" width="6" height="13" rx="3" fill="#111"/>
 <path d="M1.5 10 C1.5 14 4 16.5 7.5 16.5 C11 16.5 13.5 14 13.5 10" fill="none" stroke="#111" stroke-width="1.3"/>
 <path d="M7.5 16.5 V22" stroke="#111" stroke-width="1.3"/>
</svg>
<!-- folder -->
<svg class="a" style="left:508px;top:870px" width="22" height="19" viewBox="0 0 22 19">
 <path d="M0.5 1 H7 L8.5 2.5 H21.5 V17.5 H0.5 Z" fill="#f6d776" stroke="#e2b94e" stroke-width="0.6"/>
 <path d="M0.5 4 H21.5" stroke="#efca5c" stroke-width="0.8"/>
 <path d="M4 11 H18 V18.5 H14.5 V14.5 H7.5 V18.5 H4 Z" fill="#4aa4d9"/>
</svg>
<!-- steam -->
<svg class="a" style="left:556px;top:868px" width="24" height="24" viewBox="0 0 24 24">
 <defs><linearGradient id="stg" x1="0" y1="0" x2="0" y2="1"><stop offset="0" stop-color="#0b1436"/><stop offset="0.45" stop-color="#0f2a6a"/><stop offset="1" stop-color="#1a72b0"/></linearGradient></defs>
 <circle cx="12" cy="12" r="11.2" fill="url(#stg)"/>
 <circle cx="15.5" cy="8.5" r="3.8" fill="none" stroke="#e8e8ea" stroke-width="1.6"/>
 <circle cx="15.5" cy="8.5" r="1.8" fill="#b8bcc4"/>
 <path d="M1.5 11.5 L7 13.5 C8.5 11.5 11 11 13 11.5 L13.5 11 L15 12 C14 14.5 12.5 17 10 18 C7.5 19 5 18 4 16 Z" fill="#e6e8f0"/>
</svg>
<!-- yandex -->
<svg class="a" style="left:605px;top:868px" width="24" height="24" viewBox="0 0 24 24">
 <circle cx="12" cy="12" r="11" fill="#ececec"/>
 <path d="M7 5.5 L12 12.5 L17 5.5 M12 12.5 V20" stroke="#dc2a24" stroke-width="2.6" fill="none"/>
</svg>
<div class="a" style="left:597px;top:898px;width:40px;height:2px;background:#9cebe3"></div>
<!-- battle.net -->
<div class="a" style="left:655px;top:868px;width:23px;height:24px;background:#020204"></div>
<svg class="a" style="left:655px;top:868px" width="23" height="24" viewBox="0 0 23 24">
 <g fill="none" stroke="#3a9ae0" stroke-width="1.5" opacity="0.95">
 <ellipse cx="11.5" cy="12.5" rx="8" ry="3.6" transform="rotate(30 11.5 12.5)"/>
 <ellipse cx="11.5" cy="12.5" rx="8" ry="3.6" transform="rotate(90 11.5 12.5)"/>
 <ellipse cx="11.5" cy="12.5" rx="8" ry="3.6" transform="rotate(150 11.5 12.5)"/>
 </g>
 <path d="M1.5 9.5 L5 9" stroke="#3a9ae0" stroke-width="1"/>
</svg>
<!-- skype -->
<svg class="a" style="left:703px;top:867px" width="25" height="25" viewBox="0 0 25 25">
 <path d="M8 1.5 C10 1.5 11 2.5 12.5 2.5 C18.5 2.5 22.5 6.5 22.5 12.5 C22.5 14 23.5 15 23.5 17 C23.5 20.5 20.5 23.5 17 23.5 C15 23.5 14 22.5 12.5 22.5 C6.5 22.5 2.5 18.5 2.5 12.5 C2.5 11 1.5 10 1.5 8 C1.5 4.5 4.5 1.5 8 1.5 Z" fill="#2aa5e8"/>
 <path d="M16.5 8.5 C15.5 7 14 6.5 12.5 6.5 C10 6.5 8.5 7.8 8.5 9.5 C8.5 13 16.5 11.5 16.5 15.5 C16.5 17.3 14.8 18.5 12.5 18.5 C10.5 18.5 9 17.5 8.2 16" fill="none" stroke="#fff" stroke-width="2.4"/>
</svg>
<!-- paint active -->
<div class="a" style="left:740px;top:860px;width:48px;height:40px;background:#3a3e44"></div>
<div class="a" style="left:740px;top:898px;width:48px;height:2px;background:#9cebe3"></div>
<svg class="a" style="left:751px;top:868px" width="26" height="24" viewBox="0 0 26 24">
 <ellipse cx="12" cy="14.5" rx="10.5" ry="8" fill="#dde9f3" stroke="#a9bccc" stroke-width="0.6" transform="rotate(-12 12 14.5)"/>
 <circle cx="6" cy="13" r="1.8" fill="#d9604f"/>
 <circle cx="9" cy="9.5" r="1.7" fill="#5cb84a"/>
 <circle cx="13.5" cy="8" r="1.8" fill="#f2b33a"/>
 <circle cx="11" cy="14.5" r="1.5" fill="#1f2a36"/>
 <path d="M11 22.5 L19.5 7" stroke="#d9a55e" stroke-width="1.8"/>
 <ellipse cx="21" cy="4.8" rx="2.6" ry="3.3" fill="#e8c08a" transform="rotate(30 21 4.8)"/>
</svg>
<!-- tray -->
<svg class="a" style="left:1341px;top:871px" width="17" height="16" viewBox="0 0 17 16">
 <circle cx="11.5" cy="4.3" r="3" fill="none" stroke="#fff" stroke-width="1.1"/>
 <path d="M6.5 12 C7 9.5 9 8 11.5 8 C14 8 15.5 9.5 16 11" fill="none" stroke="#fff" stroke-width="1.1"/>
 <circle cx="5.5" cy="8" r="2.8" fill="#0b0f14" stroke="#fff" stroke-width="1.1"/>
 <path d="M0.8 15.5 C1.2 13 3 11.3 5.5 11.3 C8 11.3 9.8 13 10.2 15.5" fill="none" stroke="#fff" stroke-width="1.1"/>
</svg>
<svg class="a" style="left:1378px;top:875px" width="14" height="9" viewBox="0 0 14 9"><path d="M1 7.5 L7 1.5 L13 7.5" fill="none" stroke="#fff" stroke-width="1.2"/></svg>
<svg class="a" style="left:1400px;top:872px" width="18" height="15" viewBox="0 0 18 15">
 <path d="M0.6 5 H3.5 L7.5 1 V14 L3.5 10 H0.6 Z" fill="none" stroke="#fff" stroke-width="1.1"/>
 <path d="M10 5 C11 6.5 11 8.5 10 10" fill="none" stroke="#fff" stroke-width="1.1"/>
 <path d="M12.5 3 C14.5 5.5 14.5 9.5 12.5 12" fill="none" stroke="#aaa" stroke-width="1"/>
 <path d="M15 1 C17.8 4.5 17.8 10.5 15 14" fill="none" stroke="#888" stroke-width="1"/>
</svg>
<svg class="a" style="left:1427px;top:874px" width="15" height="13" viewBox="0 0 15 13">
 <path d="M1 12 C1 6 6 1 12 1" fill="none" stroke="#999" stroke-width="1"/>
 <path d="M4 12 C4 8 8 4 12 4" fill="none" stroke="#bbb" stroke-width="1"/>
 <path d="M7 12 C7 9.5 9.5 7 12 7" fill="none" stroke="#ddd" stroke-width="1"/>
 <circle cx="12" cy="11" r="1.6" fill="#fff"/>
</svg>
<div class="a" style="left:1452px;top:873px;font-size:12.5px;line-height:14px;color:#fff;white-space:nowrap;transform:scaleX(0.92);transform-origin:0 0">РУС</div>
<div class="a" style="left:1500px;top:864px;font-size:12px;line-height:14px;color:#fff;white-space:nowrap;transform:scaleX(0.92);transform-origin:0 0">23:04</div>
<div class="a" style="left:1488px;top:882px;font-size:12px;line-height:14px;color:#fff;white-space:nowrap;transform:scaleX(0.9);transform-origin:0 0">12.05.2018</div>
<svg class="a" style="left:1558px;top:871px" width="26" height="26" viewBox="0 0 26 26">
 <path d="M0.5 0.5 H16.5 V11.5 H7 L3 15 V11.5 H0.5 Z" fill="#fff"/>
 <path d="M3 3.5 H14 M3 6 H14 M3 8.5 H10" stroke="#0b0f14" stroke-width="1"/>
 <circle cx="16.5" cy="17" r="7.8" fill="#3a3a3a" stroke="#1a1a1a" stroke-width="1"/>
</svg>
<div class="a" style="left:1569px;top:881px;width:12px;text-align:center;font-size:12px;line-height:14px;font-weight:bold;color:#fff">3</div>
<div class="a" style="left:1595px;top:860px;width:1px;height:40px;background:#50545a"></div>
</div>
</body></html>
